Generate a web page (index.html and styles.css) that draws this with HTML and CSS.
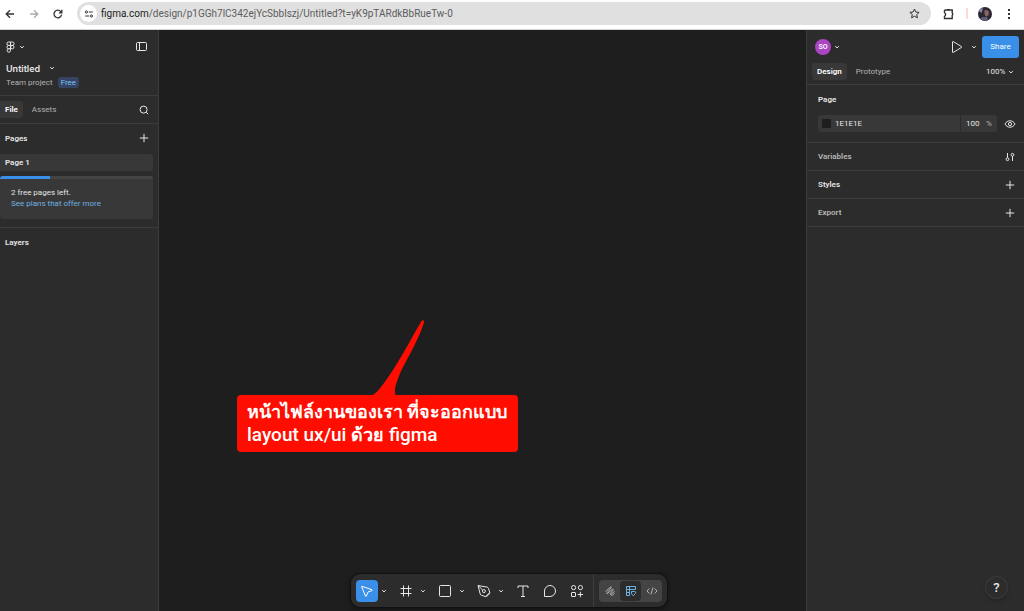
FILE: index.html
```html
<!DOCTYPE html>
<html lang="th">
<head>
    <meta charset="UTF-8">
    <meta name="viewport" content="width=device-width, initial-scale=1.0">
    <title>Untitled – Figma</title>
    <link rel="stylesheet" href="styles.css">
</head>
<body>
    <svg class="sprite" aria-hidden="true">
        <symbol id="chevron" viewBox="0 0 6 6"><path d="M1.2 2.2 3 3.9 4.8 2.2"/></symbol>
        <symbol id="plus" viewBox="0 0 10 10"><path d="M5 .8v8.4M.8 5h8.4"/></symbol>
    </svg>

    <!-- browser bar -->
    <header class="browser">
        <button class="nav-btn" aria-label="Back"><svg width="10" height="10" viewBox="0 0 10 10"><path d="M9 5H1.5M5 1.2 1.2 5 5 8.8"/></svg></button>
        <button class="nav-btn muted" aria-label="Forward"><svg width="10" height="10" viewBox="0 0 10 10"><path d="M1 5h7.5M5 1.2 8.8 5 5 8.8"/></svg></button>
        <button class="nav-btn" aria-label="Reload"><svg width="10" height="10" viewBox="0 0 10 10"><path d="M8.6 5.6A3.8 3.8 0 1 1 7.8 2.6L8.6 3.5M8.8.8v3H5.9"/></svg></button>
        <div class="address">
            <button class="site-info" aria-label="Site information"><svg width="10" height="10" viewBox="0 0 10 10"><circle cx="2.4" cy="3" r="1.1"/><path d="M4.8 3h4M1.2 7h4"/><circle cx="7.5" cy="7" r="1.1"/></svg></button>
            <div class="url" role="textbox" aria-label="Address"><span>figma.com</span>/design/p1GGh7lC342ejYcSbblszj/Untitled?t=yK9pTARdkBbRueTw-0</div>
            <button class="star" aria-label="Bookmark"><svg width="11" height="11" viewBox="0 0 11 11"><path d="m5.5 1 1.4 3 3.2.4-2.4 2.2.7 3.2-2.9-1.6-2.9 1.6.7-3.2L.9 4.4 4.1 4z"/></svg></button>
        </div>
        <button class="extensions" aria-label="Extensions"><svg width="12" height="12" viewBox="0 0 12 12"><path d="M1.500 2h7.700v3.200M9.200 7v3.500H1.500V7.900M1.500 5V2"/><path d="M4 1.600h2.600M9.600 4.900v2.400M1.500 5.200c1.500.2 1.500 2.400 0 2.600"/></svg></button>
        <span class="bar-line"></span>
        <button class="profile" aria-label="Profile">
            <svg width="14" height="14" viewBox="0 0 14 14"><circle cx="7" cy="7" r="7" fill="#2a2632"/><g stroke="none"><path d="M6.500 3.500c2-1.500 4.500 0 4.400 2.500-.1 2-1.200 3.600-2.600 3.500C6.800 9 6 5.500 6.500 3.500z" fill="#8a6560"/><path d="M2.500 11.500c2-2.500 5-1 6.500-1.500l1 3c-3 1.500-5.500.8-7.500-1.500z" fill="#5d6078"/><path d="M1 4c1-2 3-3 4-2.500L3.500 6z" fill="#8d8aa0"/></g></svg>
        </button>
        <button class="more" aria-label="More"><svg width="4" height="12" viewBox="0 0 4 12"><path d="M1 1h2v2H1zM1 5h2v2H1zM1 9h2v2H1z" fill="#333" stroke="none"/></svg></button>
    </header>

    <div class="app">
        <!-- left sidebar -->
        <aside class="left">
            <div class="file-head">
                <div class="row logo-row">
                    <button class="menu-btn" aria-label="Main menu">
                        <svg width="9" height="12" viewBox="0 0 9 12"><path d="M4.500 1H2.600a1.700 1.700 0 0 0 0 3.400h1.900zM4.500 1h1.900a1.700 1.700 0 0 1 0 3.400H4.500zM4.500 4.400H2.600a1.700 1.700 0 0 0 0 3.400h1.900zM4.500 7.800H2.600a1.700 1.700 0 1 0 1.900 1.700z"/><circle cx="6.300" cy="6.100" r="1.700"/></svg>
                        <svg class="chev"><use href="#chevron"/></svg>
                    </button>
                    <button aria-label="Minimize UI"><svg width="13" height="11" viewBox="0 0 13 11"><rect x="1.500" y="1.500" width="10" height="8" rx="1"/><path d="M4.500 1.500v8"/></svg></button>
                </div>
                <button class="row file-name">Untitled <svg class="chev"><use href="#chevron"/></svg></button>
                <div class="row project">Team project <span class="badge">Free</span></div>
            </div>
            <div class="row side-tabs">
                <button class="tab active">File</button>
                <button class="tab">Assets</button>
                <button class="push" aria-label="Search"><svg width="10" height="10" viewBox="0 0 10 10"><circle cx="4.600" cy="4.600" r="3.500"/><path d="m7.200 7.200 2 2"/></svg></button>
            </div>
            <section class="pages">
                <div class="row pages-head">
                    <h2>Pages</h2>
                    <button class="push" aria-label="Add page"><svg width="10" height="10"><use href="#plus"/></svg></button>
                </div>
                <button class="page-item">Page 1</button>
                <div class="plan">
                    <div class="meter"><div class="meter-fill"></div></div>
                    <p>2 free pages left.</p>
                    <a href="#">See plans that offer more</a>
                </div>
            </section>
            <div class="row layers"><h2>Layers</h2></div>
        </aside>

        <main class="canvas">
            <!-- note on the canvas -->
            <div class="note">
                <svg class="note-tail" width="56" height="77" viewBox="0 0 56 77"><path d="M0 77c6-1 12-10 21-23C31 39 41 20 51.500 2c1-1.500 3-.5 2.500 1.500C48 22 37 40 31 52c-4 10-6.500 16-6 21 0 2 0 3 2.500 4z"/></svg>
                <b>หน้าไฟล์งานของเรา ที่จะออกแบบ</b><br>layout ux/ui <b>ด้วย</b> figma
            </div>
        </main>

        <!-- right sidebar -->
        <aside class="right">
            <div class="right-head">
                <div class="row user-row">
                    <button class="user"><span class="avatar">SO</span><svg class="chev"><use href="#chevron"/></svg></button>
                    <button class="push" aria-label="Present"><svg width="12" height="14" viewBox="0 0 12 14"><path d="M1.500 2v10c0 .6.4.7.8.4L10.500 7.400q.5-.4 0-.8L2.300 1.600c-.4-.3-.8-.2-.8.4z"/></svg></button>
                    <button class="present-more" aria-label="Present options"><svg class="chev"><use href="#chevron"/></svg></button>
                    <button class="share">Share</button>
                </div>
                <div class="row right-tabs">
                    <button class="tab active">Design</button>
                    <button class="tab">Prototype</button>
                    <label class="zoom push">
                        <select aria-label="Zoom"><option>100%</option></select>
                        <svg class="chev"><use href="#chevron"/></svg>
                    </label>
                </div>
            </div>
            <section class="page-props">
                <h2>Page</h2>
                <div class="row">
                    <div class="color-field">
                        <span class="swatch"></span>
                        <input class="hex" type="text" value="1E1E1E" aria-label="Page color">
                        <input class="opacity" type="text" value="100" aria-label="Opacity">
                        <span class="unit">%</span>
                    </div>
                    <button class="push" aria-label="Show in exports"><svg width="12" height="10" viewBox="0 0 12 10"><path d="M1 5c2.200-4.300 7.800-4.300 10 0-2.200 4.300-7.800 4.300-10 0z"/><circle cx="6" cy="5" r="1.600"/></svg></button>
                </div>
            </section>
            <div class="row prop">
                <h2 class="dim">Variables</h2>
                <button class="push" aria-label="Variables"><svg width="10" height="10" viewBox="0 0 10 10"><path d="M2.500 1v4.800M7.500 4.200V9"/><circle cx="2.500" cy="7.200" r="1.400"/><circle cx="7.500" cy="2.800" r="1.400"/></svg></button>
            </div>
            <div class="row prop">
                <h2>Styles</h2>
                <button class="push" aria-label="Add style"><svg width="10" height="10"><use href="#plus"/></svg></button>
            </div>
            <div class="row prop">
                <h2 class="dim">Export</h2>
                <button class="push" aria-label="Add export"><svg width="10" height="10"><use href="#plus"/></svg></button>
            </div>
        </aside>

        <!-- bottom toolbar -->
        <div class="dock">
            <div class="toolbar">
                <div class="tools">
                    <button class="tool selected" aria-label="Move"><svg width="14" height="14" viewBox="0 0 14 14"><path d="M2 2.300 12 5.800c.5.2.5.6 0 .8L8 8 6.300 12c-.2.500-.6.500-.8 0L1.600 2.700c-.1-.3.1-.5.4-.4z"/></svg></button>
                    <button class="tool-more" aria-label="Move tools"><svg class="chev"><use href="#chevron"/></svg></button>
                    <button class="tool" aria-label="Frame"><svg width="14" height="14" viewBox="0 0 14 14"><path d="M4.500 1.500v11M9.500 1.500v11M1.500 4.500h11M1.500 9.500h11"/></svg></button>
                    <button class="tool-more" aria-label="Frame tools"><svg class="chev"><use href="#chevron"/></svg></button>
                    <button class="tool" aria-label="Rectangle"><svg width="14" height="14" viewBox="0 0 14 14"><rect x="1.500" y="1.500" width="11" height="11" rx="1"/></svg></button>
                    <button class="tool-more" aria-label="Shape tools"><svg class="chev"><use href="#chevron"/></svg></button>
                    <button class="tool" aria-label="Pen"><svg width="14" height="14" viewBox="0 0 14 14"><path d="M1 1.500 3.200 10c.2.700.5 1 1.200 1.200L8.500 12.600 12.800 8.600 11.500 4.500c-.2-.7-.6-1.100-1.200-1.300zM1 1.500l4.700 4.600M8.500 12.600c.8.600 3.600-1.800 4.300-4"/><circle cx="6.900" cy="7.100" r="1.500"/></svg></button>
                    <button class="tool-more" aria-label="Pen tools"><svg class="chev"><use href="#chevron"/></svg></button>
                    <button class="tool" aria-label="Text"><svg width="14" height="14" viewBox="0 0 14 14"><path d="M2 4V2h10v2M7 2v10.500M5 12.500h4"/></svg></button>
                    <button class="tool next" aria-label="Comment"><svg width="14" height="14" viewBox="0 0 14 14"><path d="M1.500 12.500V7A5.500 5.500 0 1 1 7 12.500z"/></svg></button>
                    <button class="tool next" aria-label="Actions"><svg width="14" height="14" viewBox="0 0 14 14"><circle cx="3.600" cy="3.600" r="2.100"/><circle cx="10.400" cy="3.600" r="2.100"/><rect x="1.500" y="8.500" width="4" height="4" rx=".5"/><path d="M10.400 7.800v5.400M7.700 10.500h5.400"/></svg></button>
                </div>
                <div class="modes">
                    <div class="switch">
                        <button aria-label="Draw"><svg width="12" height="12" viewBox="0 0 12 12"><path d="M1.500 6.500 6.500 2c.8-.6 1.200 0 .7.700L3 7.800c-.6.900 0 1.200.8.500L8.300 4.400c.9-.6 1.400 0 .8.700L6.300 8.600c-.5.800 0 1.200.8.600L10.500 6.500M7 9.500l1 1.200 2.500-2.500"/></svg></button>
                        <button class="on" aria-label="Design"><svg width="12" height="12" viewBox="0 0 12 12"><path d="M1.500 1.500h9v3h-9zM1.500 4.500v6h3v-9M2 7.500h2M6.500 6.500h3.200c1.300 0 1.300 1.500.5 2.200L8.300 10.800 6.500 8.800z"/></svg></button>
                        <button aria-label="Dev Mode"><svg width="12" height="12" viewBox="0 0 12 12"><path d="M3.300 3.500 1 6l2.300 2.500M8.700 3.500 11 6 8.700 8.500M7 2.500l-2 7"/></svg></button>
                    </div>
                </div>
            </div>
        </div>

        <button class="help" aria-label="Help">?</button>
    </div>
</body>
</html>
```

FILE: styles.css
```css
* {
    box-sizing: border-box;
}

body {
    margin: 0;
    min-height: 100vh;
    display: flex;
    flex-direction: column;
    background: #1e1e1e;
    color: #e6e6e6;
    font-family: Roboto, Inter, "Noto Sans", sans-serif;
    font-size: 8px;
    line-height: 11px;
}

button, input, select {
    font: inherit;
    color: inherit;
    background: none;
    border: none;
    margin: 0;
    padding: 0;
}

button {
    display: flex;
    align-items: center;
    justify-content: center;
    cursor: pointer;
}

svg {
    display: block;
    flex: none;
    fill: none;
    stroke: currentColor;
    stroke-width: 1;
}

h2 {
    margin: 0;
    font-size: 8px;
    font-weight: 600;
}

.sprite {
    position: absolute;
    width: 0;
    height: 0;
}

.chev {
    width: 6px;
    height: 6px;
}

.row {
    display: flex;
    align-items: center;
}

.push {
    margin-left: auto;
}

/* browser bar */
.browser {
    display: flex;
    align-items: center;
    height: 30px;
    padding: 0 13px 2px 5px;
    background: #fff;
    border-bottom: 1px solid #d4d4d4;
    color: #333;
}

.nav-btn {
    width: 10px;
    margin-right: 14px;
}

.nav-btn svg {
    stroke-width: 1.3;
}

.nav-btn.muted {
    color: #aaa;
}

.address {
    flex: 1;
    display: flex;
    align-items: center;
    height: 23px;
    margin-right: 12px;
    padding: 0 11px 0 3px;
    border-radius: 12px;
    background: #e0e0e0;
}

.site-info {
    width: 17px;
    height: 17px;
    border-radius: 50%;
    background: #fff;
}

.url {
    flex: 1;
    margin-left: 4px;
    font-size: 10px;
    line-height: 14px;
    color: #5c5c5c;
}

.url span {
    color: #222;
}

.extensions {
    margin-right: 11px;
}

.extensions svg {
    stroke-width: 1.4;
}

.bar-line {
    width: 2px;
    height: 11px;
    margin-right: 10px;
    background: #fbdccd;
}

.profile svg {
    stroke: none;
}

.more {
    margin-left: 15px;
}

/* layout */
.app {
    position: relative;
    flex: 1;
    display: flex;
}

.left {
    width: 159px;
    background: #2c2c2c;
    border-right: 1px solid #3c3c3c;
}

.canvas {
    position: relative;
    flex: 1;
}

.right {
    width: 218px;
    background: #2c2c2c;
    border-left: 1px solid #3c3c3c;
}

/* left sidebar */
.file-head {
    height: 66px;
    padding: 8px 10px 0 6px;
    border-bottom: 1px solid #3c3c3c;
}

.logo-row {
    height: 17px;
    justify-content: space-between;
}

.menu-btn {
    gap: 4px;
}

.file-name {
    height: 14px;
    margin-top: 6px;
    gap: 9px;
    font-family: Inter, "Noto Sans", sans-serif;
    font-size: 9px;
    font-weight: 600;
}

.project {
    height: 14px;
    gap: 5px;
    color: #b3b3b3;
}

.badge {
    padding: 0 3px;
    border-radius: 3px;
    background: #364362;
    color: #7cc4f8;
}

.tab {
    height: 17px;
    padding: 0 5px;
    border-radius: 3px;
    color: #b3b3b3;
}

.tab.active {
    background: #383838;
    color: #fff;
    font-weight: 600;
}

.side-tabs {
    height: 28px;
    padding-right: 9px;
    gap: 4px;
    border-bottom: 1px solid #3c3c3c;
}

.side-tabs .active {
    border-radius: 0 3px 3px 0;
}

.pages {
    padding-bottom: 8px;
    border-bottom: 1px solid #3c3c3c;
}

.pages-head {
    height: 28px;
    padding: 0 9px 0 5px;
}

.page-item {
    width: 153px;
    height: 17px;
    margin-top: 2px;
    padding-left: 5px;
    justify-content: flex-start;
    border-radius: 0 3px 3px 0;
    background: #383838;
    font-weight: 600;
}

.plan {
    width: 153px;
    height: 43px;
    margin-top: 5px;
    border-radius: 3px;
    background: #383838;
    overflow: hidden;
}

.meter {
    height: 3px;
    margin-bottom: 8px;
    background: #444;
}

.meter-fill {
    width: 33%;
    height: 3px;
    background: #3a8fe8;
}

.plan p, .plan a {
    display: block;
    margin: 0 0 0 11px;
}

.plan a {
    color: #6fb1e0;
    text-decoration: none;
}

.layers {
    height: 28px;
    padding-left: 5px;
}

/* note */
.note {
    position: absolute;
    left: 78px;
    top: 365px;
    width: 281px;
    padding: 5px 10px 6px;
    border-radius: 4px;
    background: #ff0d00;
    color: #fff;
    font-size: 19px;
    line-height: 23px;
    font-weight: 500;
    white-space: nowrap;
}

.note b {
    font-size: 18px;
    font-weight: 700;
}

.note-tail {
    position: absolute;
    left: 133px;
    top: -76px;
    fill: #ff0d00;
    stroke: none;
}

/* right sidebar */
.right-head {
    height: 55px;
    padding: 5px 5px 0 5px;
    border-bottom: 1px solid #3c3c3c;
}

.user-row {
    height: 23px;
}

.user {
    margin-left: 3px;
    gap: 3px;
}

.avatar {
    width: 16px;
    height: 16px;
    border-radius: 50%;
    background: #ab45c3;
    color: #fff;
    font-size: 7px;
    line-height: 16px;
    font-weight: 600;
}

.present-more {
    margin: 0 5px 0 8px;
}

.share {
    width: 37px;
    height: 22px;
    border-radius: 3px;
    background: #3a8fe8;
    color: #fff;
}

.right-tabs {
    height: 17px;
    margin-top: 5px;
    gap: 4px;
}

.zoom {
    display: flex;
    align-items: center;
    gap: 2px;
    margin-right: 5px;
}

.zoom select {
    appearance: none;
}

.page-props {
    height: 58px;
    padding: 9px 8px 0 11px;
    border-bottom: 1px solid #3c3c3c;
}

.page-props .row {
    margin-top: 10px;
}

.color-field {
    display: flex;
    align-items: center;
    width: 179px;
    height: 17px;
    padding-left: 4px;
    border-radius: 3px;
    background: #383838;
}

.swatch {
    width: 9px;
    height: 9px;
    border-radius: 1px;
    background: #1e1e1e;
}

.hex {
    flex: 1;
    min-width: 0;
    height: 17px;
    margin-left: 4px;
}

.opacity {
    width: 26px;
    height: 17px;
    padding-left: 5px;
    border-left: 1px solid #2c2c2c;
}

.unit {
    width: 11px;
    color: #b3b3b3;
}

.prop {
    height: 28px;
    padding: 0 9px 0 11px;
    border-bottom: 1px solid #3c3c3c;
}

.dim {
    color: #b8b8b8;
}

/* toolbar */
.dock {
    position: absolute;
    left: 0;
    right: 6px;
    bottom: 4px;
    display: flex;
    justify-content: center;
    pointer-events: none;
}

.toolbar {
    display: flex;
    height: 33px;
    border-radius: 9px;
    background: #2c2c2c;
    box-shadow: 0 0 1px 1px #111, 0 2px 6px rgba(0,0,0,0.4);
    pointer-events: auto;
}

.tools {
    display: flex;
    align-items: center;
    padding: 0 5px;
}

.tool {
    width: 22px;
    height: 22px;
    border-radius: 4px;
}

.tool.selected {
    background: #3a8fe8;
    color: #fff;
}

.tool.next {
    margin-left: 5px;
}

.tool-more {
    width: 12px;
    height: 22px;
    margin-right: 5px;
}

.modes {
    display: flex;
    align-items: center;
    padding: 0 5px;
    border-left: 1px solid #3c3c3c;
}

.switch {
    display: flex;
    height: 22px;
    border-radius: 4px;
    background: #444;
    color: #b3b3b3;
}

.switch button {
    width: 21px;
}

.switch .on {
    margin: 1px 0;
    border-radius: 4px;
    background: #2c2c2c;
    color: #6fb1e0;
}

.help {
    position: absolute;
    right: 17px;
    bottom: 13px;
    width: 21px;
    height: 21px;
    border-radius: 50%;
    background: #2c2c2c;
    box-shadow: 0 0 1px 1px #3c3c3c, 0 2px 4px rgba(0,0,0,0.4);
    font-size: 13px;
    font-weight: 500;
}
```
